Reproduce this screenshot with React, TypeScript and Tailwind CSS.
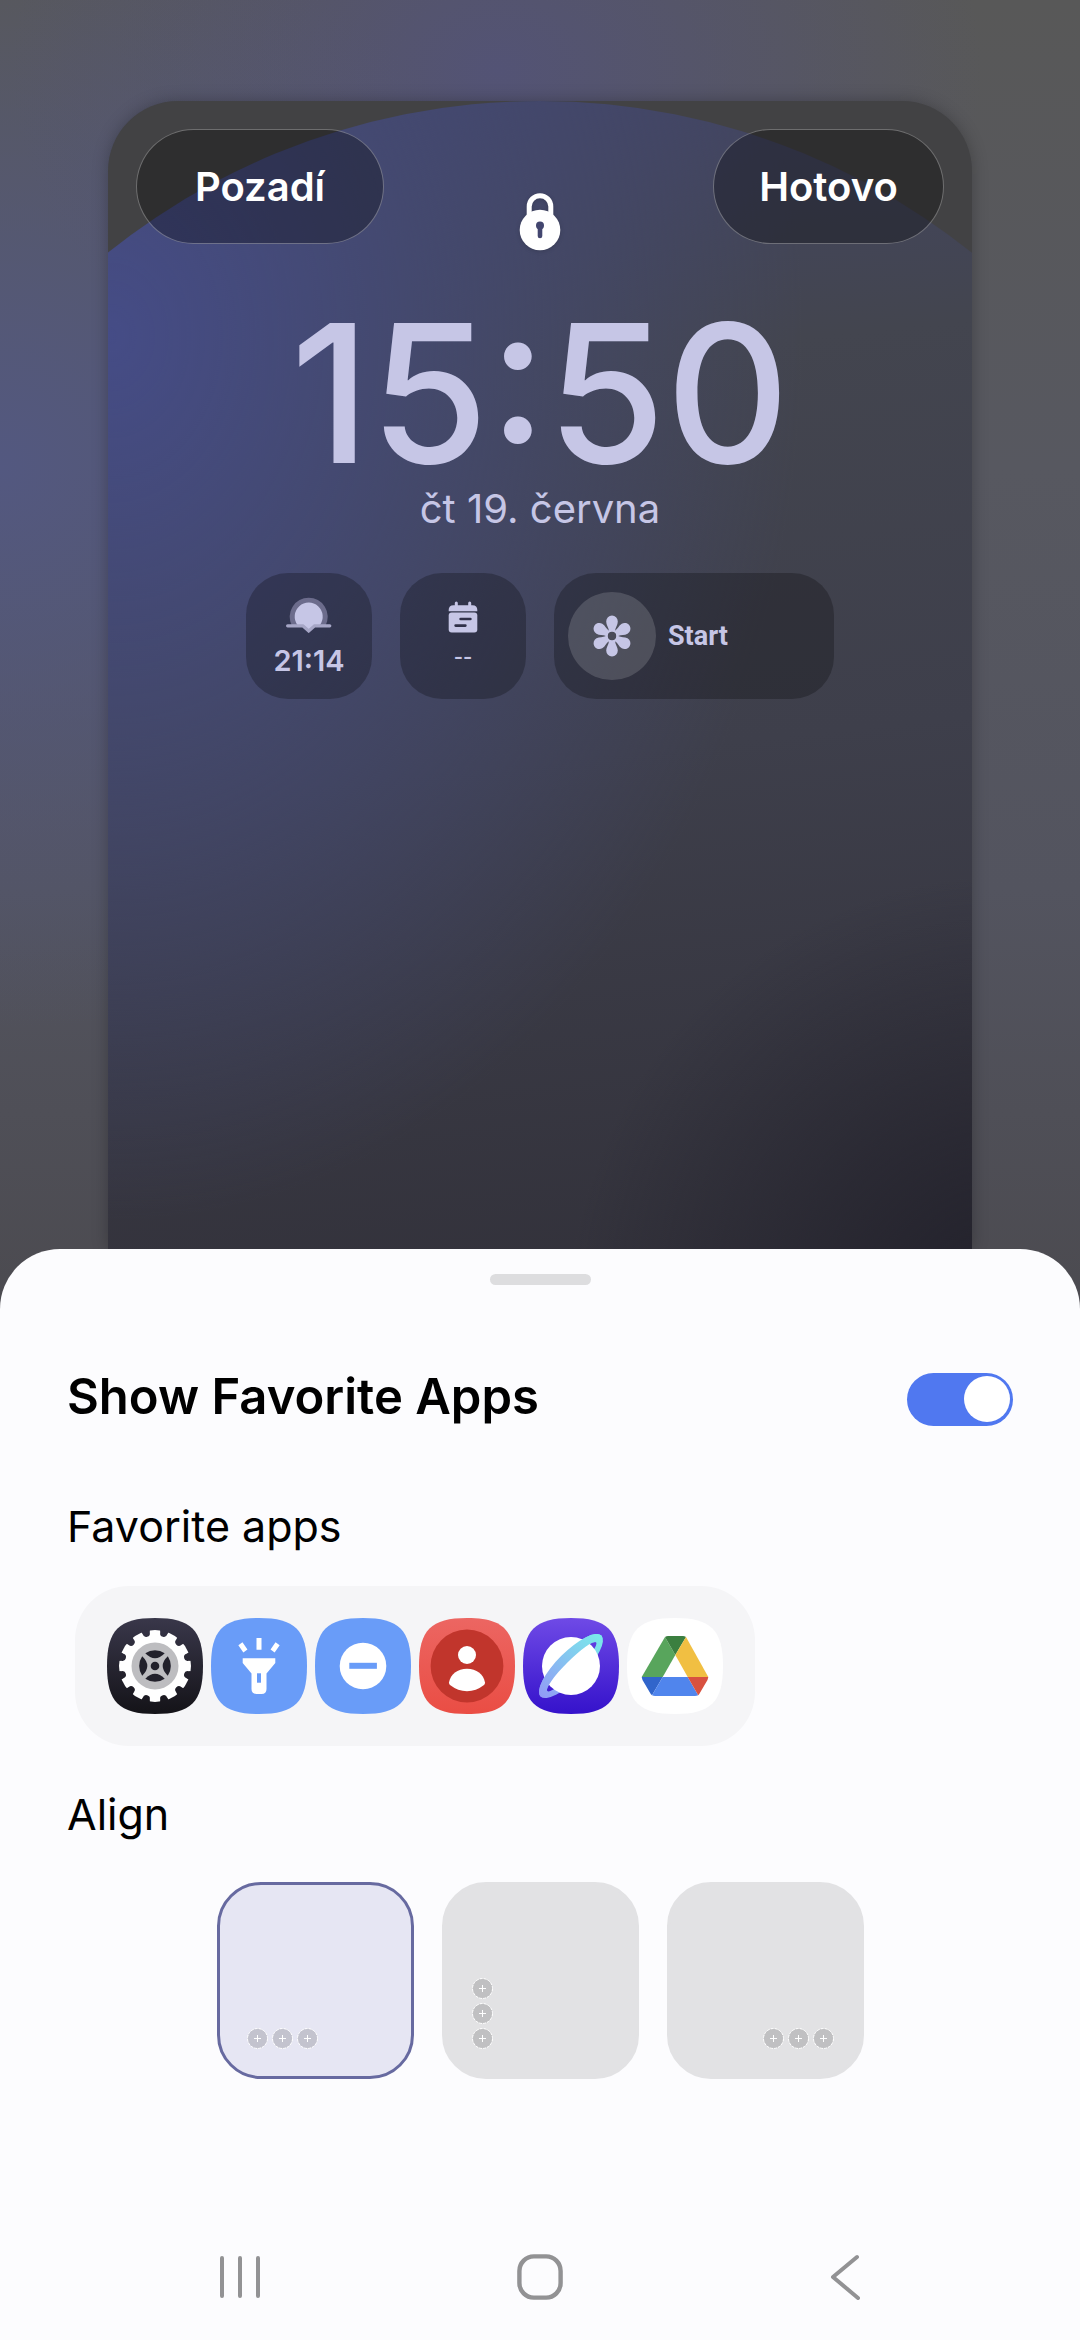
import { useState } from "react";

// === Favorite apps icons ===
const SQUIRCLE =
  "M0 48C0 12 12 0 48 0S96 12 96 48 84 96 48 96 0 84 0 48Z";

function SettingsIcon() {
  const notches = Array.from({ length: 12 }, (_, i) => 15 + i * 30);
  return (
    <svg viewBox="0 0 96 96" className="size-24">
      <defs>
        <linearGradient id="settingsBg" x1="0" y1="0" x2="0" y2="1">
          <stop offset="0" stopColor="#39374a" />
          <stop offset="1" stopColor="#141318" />
        </linearGradient>
        <mask id="gear">
          <circle cx="48" cy="48" r="36" fill="#fff" />
          {notches.map((a) => (
            <g key={a} transform={`rotate(${a} 48 48)`} fill="#000">
              <circle cx="48" cy="14.2" r="3.6" />
              <path d="M44.4 14.2L42.9 10H53.1L51.6 14.2Z" />
            </g>
          ))}
        </mask>
      </defs>
      <path d={SQUIRCLE} fill="url(#settingsBg)" />
      <rect width="96" height="96" fill="#fff" mask="url(#gear)" />
      <circle cx="48" cy="48" r="23.5" fill="#bdbdc0" />
      <g fill="#22212b">
        <circle cx="48" cy="48" r="4.3" />
        {[0, 90, 180, 270].map((a) => (
          <path
            key={a}
            d="M38.3 35.2A17 17 0 0 1 57.7 35.2Q48 45.4 38.3 35.2Z"
            transform={`rotate(${a} 48 48)`}
          />
        ))}
      </g>
    </svg>
  );
}

function FlashlightIcon() {
  return (
    <svg viewBox="0 0 96 96" className="size-24">
      <path d={SQUIRCLE} fill="#699cf8" />
      <path
        d="M48 20V31.7M29.4 25.8L34.4 33M66.6 25.8L61.6 33"
        stroke="#fff"
        strokeWidth="5"
      />
      <path
        d="M31.7 40.3H64.3V45L55.5 55.5V71Q55.5 76 50.5 76H45.5Q40.5 76 40.5 71V55.5L31.7 45Z"
        fill="#fff"
      />
      <rect x="46" y="55.3" width="4" height="9.4" fill="#699cf8" />
    </svg>
  );
}

function DoNotDisturbIcon() {
  return (
    <svg viewBox="0 0 96 96" className="size-24">
      <path d={SQUIRCLE} fill="#699cf8" />
      <circle cx="48" cy="48" r="23.3" fill="#fff" />
      <rect x="34.3" y="44.8" width="27.6" height="6" fill="#699cf8" />
    </svg>
  );
}

function ContactIcon() {
  return (
    <svg viewBox="0 0 96 96" className="size-24">
      <defs>
        <linearGradient id="contactBg" x1="0" y1="0" x2="0" y2="1">
          <stop offset="0" stopColor="#ec6662" />
          <stop offset="1" stopColor="#ea4d44" />
        </linearGradient>
      </defs>
      <path d={SQUIRCLE} fill="url(#contactBg)" />
      <circle cx="48" cy="48" r="36.4" fill="#c1352c" />
      <circle cx="48" cy="37" r="9" fill="#fff" />
      <path
        d="M30 64.5C31.5 56 38.5 50.7 48 50.7S64.5 56 66 64.5Q66 66 65 67Q57 73.2 48 73.2T31 67Q30 66 30 64.5Z"
        fill="#fff"
      />
    </svg>
  );
}

function BrowserIcon() {
  const ring =
    "M-43 0A43 14 0 1 1 43 0A43 14 0 1 1 -43 0ZM-34.5 1A34.5 6 0 1 0 34.5 1A34.5 6 0 1 0 -34.5 1Z";
  return (
    <svg viewBox="0 0 96 96" className="size-24">
      <defs>
        <linearGradient id="browserBg" x1="0" y1="0" x2="0" y2="1">
          <stop offset="0" stopColor="#6f4ae6" />
          <stop offset="1" stopColor="#3512cb" />
        </linearGradient>
        <linearGradient id="ring" x1="0" y1="0" x2="1" y2="0">
          <stop offset="0" stopColor="#929bf6" />
          <stop offset="1" stopColor="#79ebea" />
        </linearGradient>
        <clipPath id="ringFront">
          <rect x="-48" y="-20" width="96" height="21" />
        </clipPath>
      </defs>
      <path d={SQUIRCLE} fill="url(#browserBg)" />
      <g transform="translate(48 48) rotate(-45)">
        <path d={ring} fill="url(#ring)" fillRule="evenodd" />
        <circle r="29" fill="#fff" />
        <path d={ring} fill="url(#ring)" fillRule="evenodd" clipPath="url(#ringFront)" />
      </g>
    </svg>
  );
}

function DriveIcon() {
  return (
    <svg viewBox="0 0 96 96" className="size-24">
      <path d={SQUIRCLE} fill="#fff" />
      <path d="M38 19L14.7 59H35.7L48.3 37Z" fill="#58a55c" />
      <path d="M38 19Q39.5 18 41 18H56Q57.5 18 59 19L48.3 37Z" fill="#3b7f40" />
      <path d="M59 19L81.3 59H60.7L48.3 37Z" fill="#f1bf42" />
      <path d="M14.7 59H35.7L25 77.2Q23.5 76 23 74.8L15.5 62Z" fill="#3165cb" />
      <path d="M35.7 59H60.7L71.2 77.2Q69.5 78 68 78H28Q26.5 78 25 77.2Z" fill="#5085ed" />
      <path d="M60.7 59H81.3L80.5 62L73 74.8Q72.5 76 71.2 77.2Z" fill="#d85140" />
    </svg>
  );
}

const favoriteApps = [
  { id: 1, name: "Settings", Icon: SettingsIcon },
  { id: 2, name: "Flashlight", Icon: FlashlightIcon },
  { id: 3, name: "Do not disturb", Icon: DoNotDisturbIcon },
  { id: 4, name: "Contacts", Icon: ContactIcon },
  { id: 5, name: "Internet", Icon: BrowserIcon },
  { id: 6, name: "Drive", Icon: DriveIcon },
];

const alignments = [
  { id: "left", label: "Left", layout: "items-end justify-start" },
  { id: "vertical", label: "Vertical", layout: "flex-col items-start justify-end" },
  { id: "right", label: "Right", layout: "items-end justify-end" },
];

// === Lock screen icons ===
function LockIcon() {
  return (
    <svg viewBox="0 0 44 60" className="mt-16 h-[60px] w-11 justify-self-center drop-shadow-sm">
      <path d="M11.2 24V13.5a10.8 10.8 0 0 1 21.6 0V24" fill="none" stroke="#fff" strokeWidth="5" />
      <circle cx="22" cy="37" r="20.3" fill="#fff" />
      <circle cx="22" cy="32.5" r="4" fill="#43466f" />
      <path d="M22 33V43" stroke="#43466f" strokeWidth="4.6" strokeLinecap="round" />
    </svg>
  );
}

function SunsetIcon() {
  return (
    <svg viewBox="0 -1 46 36" className="h-9 w-[46px]">
      <path d="M5.6 27A19 19 0 1 1 39.8 27Z" fill="#6c6c8c" />
      <path d="M11.5 27A14 14 0 1 1 33.9 27H28L22.7 32L17.4 27Z" fill="#c6c6e6" />
      <path
        d="M1.6 27.8H16.8L22.7 33L28.6 27.8H43.8"
        fill="none"
        stroke="#a6a6c6"
        strokeWidth="3.2"
        strokeLinecap="round"
      />
    </svg>
  );
}

function CalendarIcon() {
  return (
    <svg viewBox="0 0 30 32" className="h-8 w-[30px]">
      <path d="M8.3 2V7M21.7 2V7" stroke="#c6c6e6" strokeWidth="3" strokeLinecap="round" />
      <path d="M.7 10.3V9Q.7 4.3 5.5 4.3H24.5Q29.3 4.3 29.3 9V10.3Z" fill="#c6c6e6" />
      <rect x=".7" y="11.6" width="28.6" height="19.8" rx="3" fill="#c6c6e6" />
      <path
        d="M12.6 18H22.4M7.6 24.6H17.4"
        stroke="#303149"
        strokeWidth="2.6"
        strokeLinecap="round"
      />
    </svg>
  );
}

function FlowerIcon() {
  return (
    <svg viewBox="-22 -22 44 44" className="size-11">
      <g fill="#c6c6e6">
        {[0, 60, 120, 180, 240, 300].map((a) => (
          <path
            key={a}
            d="M-3 -5C-3.4 -9 -5.8 -11 -5.8 -14.6A5.8 5.8 0 0 1 5.8 -14.6C5.8 -11 3.4 -9 3 -5Z"
            transform={`rotate(${a})`}
          />
        ))}
      </g>
      <circle r="5.3" fill="none" stroke="#c6c6e6" strokeWidth="2.4" />
      <circle r="4.2" fill="#4b4c5a" />
    </svg>
  );
}

function AddDot() {
  return (
    <svg viewBox="0 0 21 21" className="size-[21px]">
      <circle cx="10.5" cy="10.5" r="10" fill="#000" fillOpacity=".15" />
      <circle cx="10.5" cy="10.5" r="10" fill="none" stroke="#fff" strokeDasharray="3 1" />
      <path d="M10.5 7V14M7 10.5H14" stroke="#fff" />
    </svg>
  );
}

export default function App() {
  const [showApps, setShowApps] = useState(true);
  const [align, setAlign] = useState("left");

  const pillBtn =
    "h-[115px] rounded-full border border-white/30 bg-black/30 text-[40px] font-semibold text-white";
  const widget = "flex h-[126px] rounded-[42px] bg-black/25 text-[#c6c6e6]";

  return (
    <div className="flex min-h-screen flex-col bg-[radial-gradient(ellipse_55%_24%_at_0%_20%,#535880,transparent),radial-gradient(ellipse_45%_16%_at_46%_3%,#535375,transparent),linear-gradient(180deg,#585858,#575860_20%,#53545f_38%,#4b4a4f_57%)] font-[Inter,'Noto_Sans',sans-serif]">
      {/* Lock screen preview */}
      <main className="flex flex-1 flex-col px-[10%] pt-[101px]">
        <div className="relative flex-1 overflow-hidden rounded-t-[70px] bg-[#424244] shadow-[0_0_16px_rgba(0,0,0,0.25)]">
          {/* wallpaper */}
          <div className="absolute top-0 left-1/2 aspect-square w-[160%] -translate-x-1/2 rounded-full bg-[radial-gradient(ellipse_50%_64%_at_19%_17%,#454c86,#444a76bb_45%,transparent),radial-gradient(ellipse_32%_32%_at_84%_88%,#22212b,transparent),linear-gradient(174deg,#424568,#43454f_22%,#3e3f4b_48%,#32313a_84%)]" />

          <div className="relative flex flex-col items-center">
            <div className="grid w-full grid-cols-3 items-start px-7 pt-7">
              <button className={`${pillBtn} w-[248px] justify-self-start`}>Pozadí</button>
              <LockIcon />
              <button className={`${pillBtn} w-[231px] justify-self-end`}>Hotovo</button>
            </div>

            <time className="mt-12 text-[192px] leading-[184px] font-medium text-[#c6c6e6]">
              15:50
            </time>
            <p className="text-[40px] leading-[48px] text-[#c6c6e6]">čt 19. června</p>

            <div className="mt-10 flex gap-7">
              <div className={`${widget} w-[126px] flex-col items-center pt-6`}>
                <SunsetIcon />
                <span className="mt-2 text-[29px] leading-10 font-semibold">21:14</span>
              </div>
              <div className={`${widget} w-[126px] flex-col items-center pt-7`}>
                <CalendarIcon />
                <span className="mt-1 text-[20px] leading-10 font-semibold">--</span>
              </div>
              <div className={`${widget} w-[280px] items-center gap-3 px-[14px]`}>
                <span className="flex size-[88px] items-center justify-center rounded-full bg-white/15">
                  <FlowerIcon />
                </span>
                <span className="font-[Roboto,sans-serif] text-[27px] font-bold">Start</span>
              </div>
            </div>
          </div>
        </div>
      </main>

      {/* Bottom sheet */}
      <section className="relative rounded-t-[60px] bg-[#fcfcfe] pt-[25px] pb-10 text-black">
        <div className="mx-auto h-[11px] w-[101px] rounded-full bg-[#dddddf]" />

        <div className="px-[67px]">
          <div className="mt-[84px] flex h-[60px] justify-between">
            <label htmlFor="showApps" className="text-[49px] leading-[56px] font-semibold">
              Show Favorite Apps
            </label>
            <input
              id="showApps"
              type="checkbox"
              role="switch"
              checked={showApps}
              onChange={(e) => setShowApps(e.target.checked)}
              className="flex h-[53px] w-[106px] appearance-none items-center self-center rounded-full bg-gray-300 px-[3px] before:size-[46px] before:rounded-full before:bg-white checked:justify-end checked:bg-[#5078f0]"
            />
          </div>

          <h2 className="mt-[69px] text-[43px] leading-[56px]">Favorite apps</h2>
          <div className="mt-8 ml-2 flex w-fit gap-2 rounded-[54px] bg-[#f5f5f7] p-8">
            {favoriteApps.map(({ id, name, Icon }) => (
              <button key={id} aria-label={name}>
                <Icon />
              </button>
            ))}
          </div>

          <h2 className="mt-10 text-[43px] leading-[56px]">Align</h2>
          <div className="mt-10 flex justify-center gap-7">
            {alignments.map((a) => (
              <label
                key={a.id}
                className={`flex size-[197px] gap-1 rounded-[44px] border-3 p-[27px] ${a.layout} ${
                  align === a.id
                    ? "border-[#676aa0] bg-[#e6e6f3]"
                    : "border-[#e2e2e4] bg-[#e2e2e4]"
                }`}
              >
                <input
                  type="radio"
                  name="align"
                  aria-label={a.label}
                  checked={align === a.id}
                  onChange={() => setAlign(a.id)}
                  className="sr-only"
                />
                <AddDot />
                <AddDot />
                <AddDot />
              </label>
            ))}
          </div>
        </div>

        {/* Navigation bar */}
        <nav className="mt-[175px] flex justify-between px-[20%]">
          <button aria-label="Recents">
            <svg viewBox="0 0 46 46" className="size-[46px]" stroke="#929294" strokeWidth="4" strokeLinecap="round">
              <path d="M6 4V42M24 4V42M42 4V42" />
            </svg>
          </button>
          <button aria-label="Home">
            <svg viewBox="0 0 46 46" className="size-[46px]" fill="none" stroke="#929294" strokeWidth="4.4">
              <rect x="2.4" y="2.4" width="41.2" height="41.2" rx="14.5" />
            </svg>
          </button>
          <button aria-label="Back">
            <svg viewBox="0 0 46 46" className="size-[46px]" fill="none" stroke="#929294" strokeWidth="4" strokeLinecap="round" strokeLinejoin="round">
              <path d="M39 3L15 23L40 44" />
            </svg>
          </button>
        </nav>
      </section>
    </div>
  );
}
